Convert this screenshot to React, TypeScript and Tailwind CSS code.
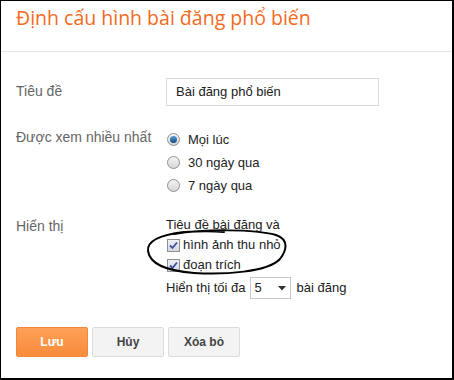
import React from 'react';

const Radio: React.FC<{ checked?: boolean }> = ({ checked }) => (
    <span className="w-[13px] h-[13px] rounded-full border border-[#8f8f8f] bg-gradient-to-b from-[#f4f4f4] to-[#d6d6d6] flex items-center justify-center shrink-0">
        {checked && <span className="w-[7px] h-[7px] rounded-full bg-gradient-to-b from-[#5a9bd8] to-[#14497f]" />}
    </span>
);

const Check: React.FC = () => (
    <span className="w-[13px] h-[13px] border border-[#8e8f8f] bg-gradient-to-b from-[#eef0f4] to-[#d4d8e2] flex items-center justify-center shrink-0">
        <svg width="9" height="9" viewBox="0 0 9 9">
            <path d="M1 4.5 L3.5 7 L8 1.5" fill="none" stroke="#3d4d9c" strokeWidth="1.8" />
        </svg>
    </span>
);

export default function App() {
    return (
        <div className="relative w-[454px] h-[380px] bg-white border-t border-l border-r-2 border-b-2 border-black font-['Liberation_Sans',Arial,sans-serif] text-[13px]">
            <header className="h-[51px] border-b border-[#e5e5e5] pl-[15px] pt-[2px]">
                <h1 className="font-['Open_Sans',sans-serif] text-[19.5px] text-[#f36a1c] leading-[30px]">Định cấu hình bài đăng phổ biến</h1>
            </header>

            <div className="pl-[15px] pt-[26px]">
                <div className="flex">
                    <div className="w-[150px] text-[14px] text-[#666] pt-[3px]">Tiêu đề</div>
                    <div className="w-[213px] h-[28px] border border-[#d9d9d9] flex items-center pl-[9px] text-[#222]">Bài đăng phổ biến</div>
                </div>

                <div className="flex mt-[22px]">
                    <div className="w-[150px] text-[14px] text-[#666] -mt-[1px]">Được xem nhiều nhất</div>
                    <div className="flex flex-col text-[#222]">
                        {['Mọi lúc', '30 ngày qua', '7 ngày qua'].map((l, i) => (
                            <div key={i} className="h-[23px] flex items-center gap-[8px] pl-[1px]">
                                <Radio checked={i === 0} />
                                <span>{l}</span>
                            </div>
                        ))}
                    </div>
                </div>

                <div className="flex mt-[18px]">
                    <div className="w-[150px] text-[14px] text-[#666] pt-[1px]">Hiển thị</div>
                    <div className="flex flex-col text-[#222]">
                        <div className="h-[20px] flex items-center">Tiêu đề bài đăng và</div>
                        <div className="h-[20px] flex items-center gap-[3px] pl-[1px]"><Check /><span>hình ảnh thu nhỏ</span></div>
                        <div className="h-[20px] flex items-center gap-[3px] pl-[1px]"><Check /><span>đoạn trích</span></div>
                        <div className="h-[24px] flex items-center mt-[1px]">
                            <span>Hiển thị tối đa</span>
                            <div className="ml-[4px] w-[41px] h-[22px] border border-[#c8c8c8] flex items-center justify-between pl-[4px] pr-[4px]">
                                <span>5</span>
                                <svg width="8" height="5" viewBox="0 0 8 5"><path d="M0 0 L8 0 L4 4.5 Z" fill="#333" /></svg>
                            </div>
                            <span className="ml-[6px]">bài đăng</span>
                        </div>
                    </div>
                </div>

                <div className="flex gap-[4px] mt-[27px] font-bold text-[12px]">
                    <button className="w-[72px] h-[30px] rounded-[2px] border border-[#f2863c] bg-gradient-to-b from-[#fda057] to-[#f78c3a] text-white">Lưu</button>
                    <button className="w-[72px] h-[30px] rounded-[2px] border border-[#dcdcdc] bg-[#f3f3f3] text-[#444]">Hủy</button>
                    <button className="w-[72px] h-[30px] rounded-[2px] border border-[#dcdcdc] bg-[#f3f3f3] text-[#444]">Xóa bỏ</button>
                </div>
            </div>

            <svg className="absolute left-[143px] top-[226px] pointer-events-none" width="146" height="52" viewBox="0 0 146 52">
                <path
                    d="M30 7 C60 2, 110 2, 132 8 C146 13, 142 24, 136 32 C124 45, 80 48, 50 46 C24 44, 6 38, 4 24 C3 14, 14 8, 40 5 C55 4, 70 4, 80 5"
                    fill="none"
                    stroke="#000"
                    strokeWidth="2"
                    strokeLinecap="round"
                />
            </svg>
        </div>
    );
}
